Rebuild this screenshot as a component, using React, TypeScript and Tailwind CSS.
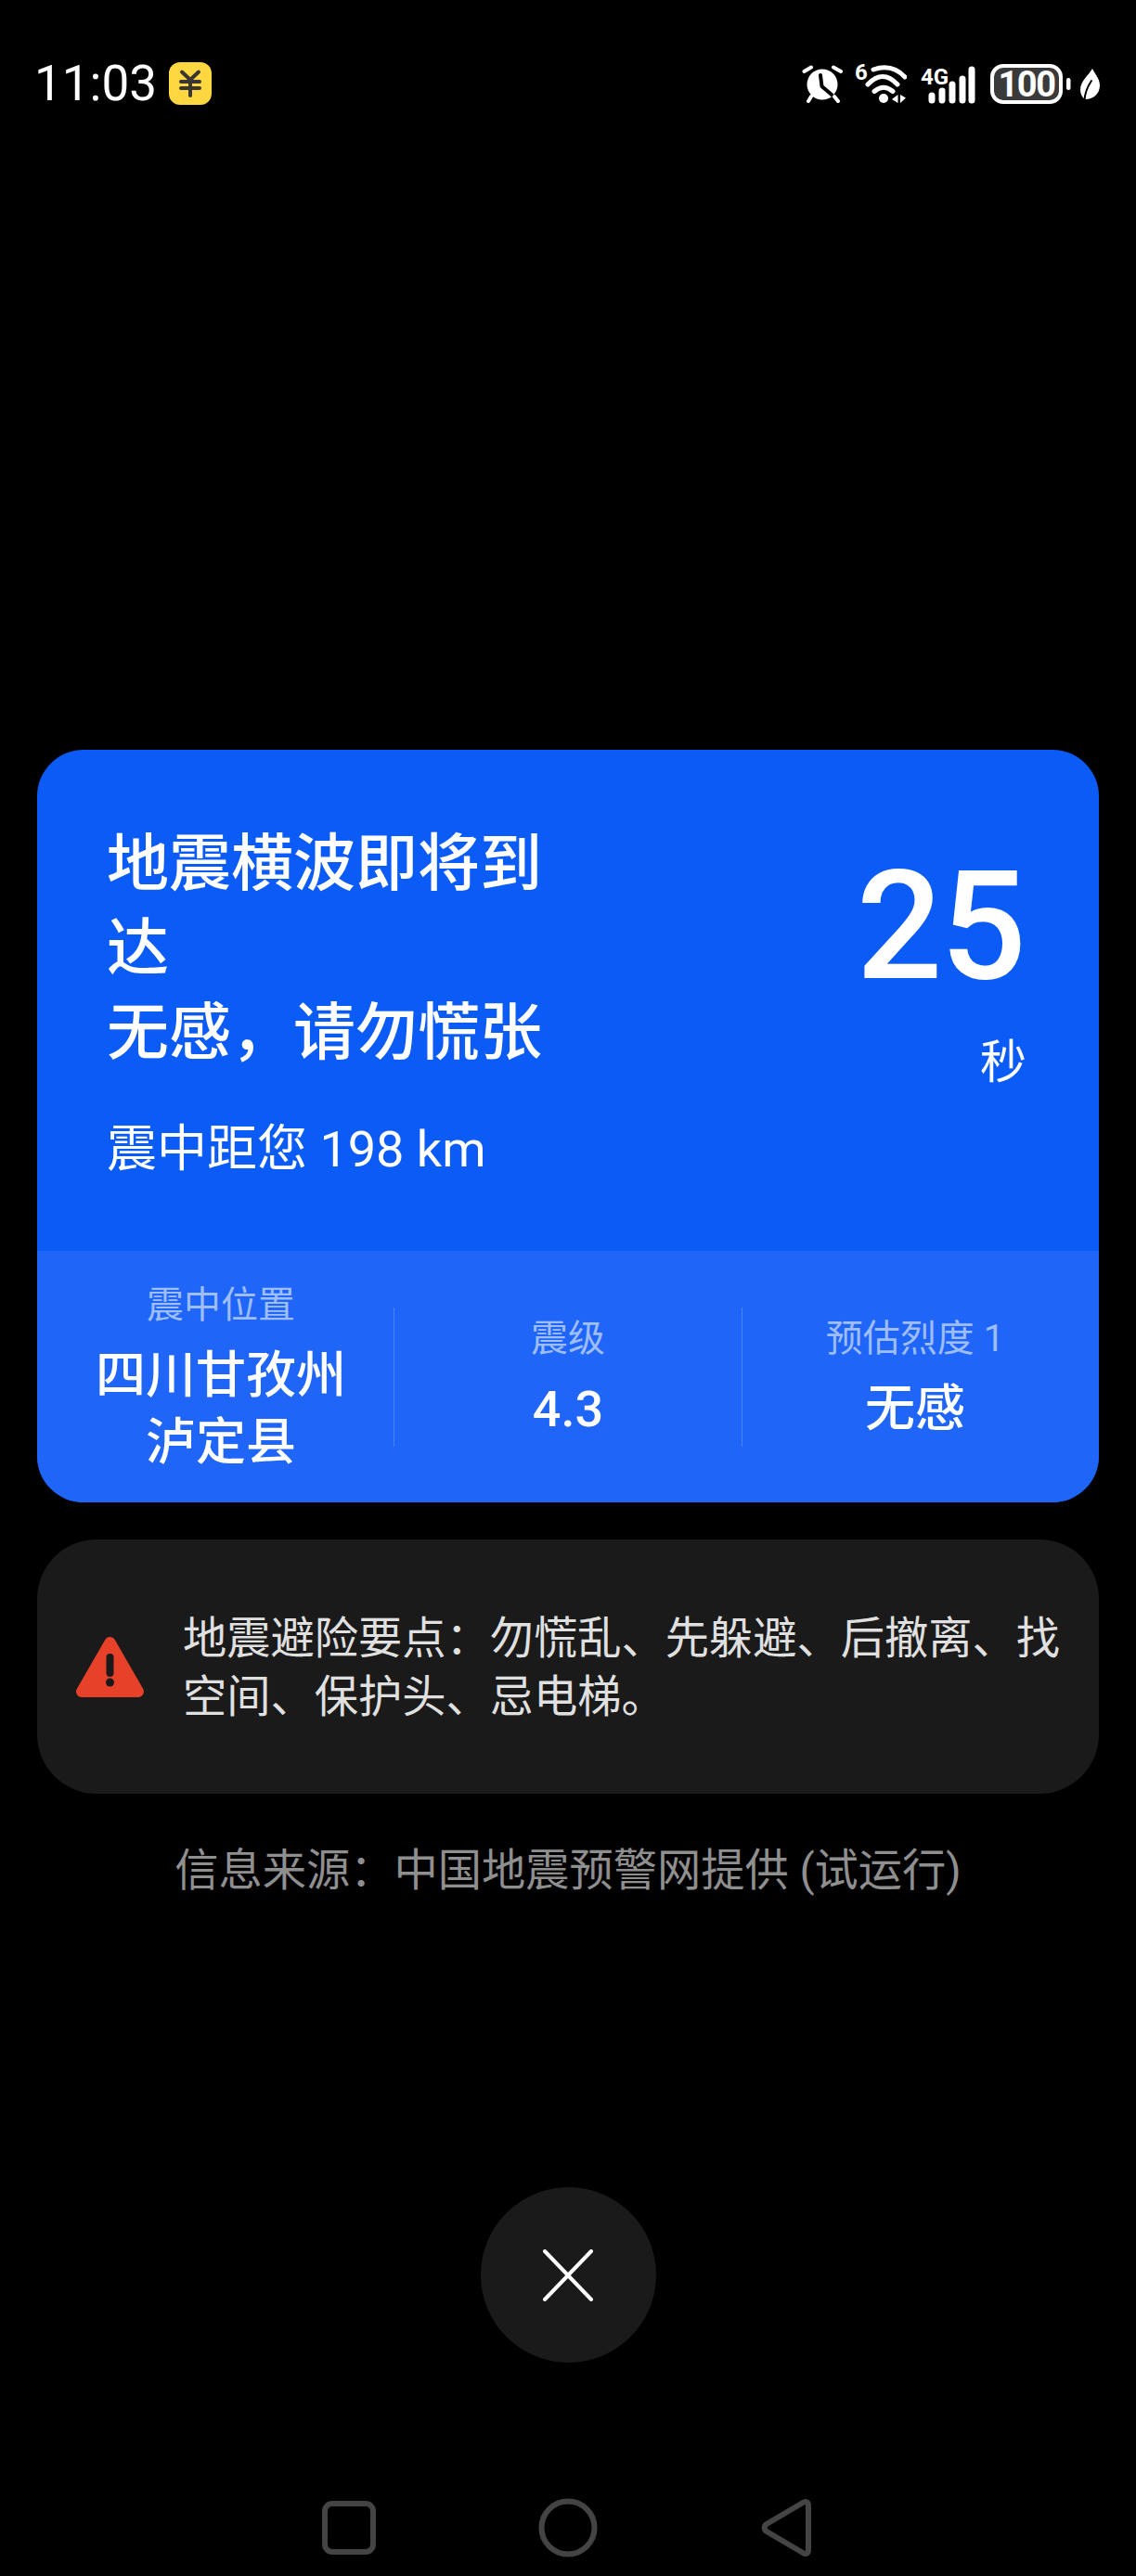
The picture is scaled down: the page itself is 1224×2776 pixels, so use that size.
function AlarmIcon() {
  return (
    <svg width="44" height="60" viewBox="0 0 44 60" fill="none">
      <circle cx="22" cy="31" r="16.5" fill="#fff" />
      <path d="M2.5 17L10 12.5M34 12.5L42 17M7 49L10 44M39 49L35 44" stroke="#fff" strokeWidth="4" strokeLinecap="round" />
      <path d="M20 21L21.5 33L32 42" stroke="#000" strokeWidth="4" strokeLinecap="round" strokeLinejoin="round" />
    </svg>
  );
}

function WifiIcon() {
  return (
    <svg width="56" height="60" viewBox="0 0 56 60" fill="none" className="font-[Roboto,sans-serif]">
      <text x="0" y="26" fontSize="24" fontWeight="700" fill="#fff">6</text>
      <path d="M20 15Q40 8 54 23M14 31Q30 14 46 31M21 38.5Q31 30 41 38.5" stroke="#fff" strokeWidth="5" strokeLinecap="round" />
      <circle cx="31" cy="46" r="5" fill="#fff" />
      <path d="M40 47L46.5 42V51ZM49 42L55 45.5L49 51Z" fill="#fff" />
    </svg>
  );
}

function SignalIcon() {
  return (
    <svg width="62" height="60" viewBox="0 0 62 60" fill="none" className="font-[Roboto,sans-serif]">
      <text x="0" y="31" fontSize="24" fontWeight="700" fill="#fff">4G</text>
      <path d="M12 43V48M23 38V48M34 31V48M45 25V48M55 15V48" stroke="#fff" strokeWidth="7" strokeLinecap="round" />
    </svg>
  );
}

function BatteryIcon() {
  return (
    <svg width="88" height="60" viewBox="0 0 88 60" fill="none" className="font-[Roboto,sans-serif]">
      <rect x="2" y="11" width="74" height="39" rx="12" fill="#3a3a3a" stroke="#fff" strokeWidth="4" />
      <text x="39" y="44" fontSize="38" fontWeight="700" fill="#fff" textAnchor="middle" letterSpacing="-1.5">100</text>
      <rect x="82" y="24" width="4.5" height="13" rx="2.2" fill="#fff" />
    </svg>
  );
}

function LeafIcon() {
  return (
    <svg width="23" height="60" viewBox="0 0 23 60" fill="none">
      <path d="M14 14C10 21 1 27 1 37C1 41 3 45 6 47C15 47 22 41 22 32C22 25 17 20 14 14Z" fill="#fff" />
      <path d="M5.5 48C6 39 9 33 13 27" stroke="#000" strokeWidth="2" strokeLinecap="round" />
    </svg>
  );
}

function YenBadge() {
  return (
    <svg width="46" height="46" viewBox="0 0 46 46" fill="none">
      <rect width="46" height="46" rx="12" fill="#ffd740" />
      <path d="M14 10.5L23 19L32 10.5M23 19V36M13 21H33M13 28H33" stroke="#3a3530" strokeWidth="4" strokeLinecap="round" strokeLinejoin="round" />
    </svg>
  );
}

function WarningIcon() {
  return (
    <svg width="73" height="65" viewBox="0 0 73 65" fill="none">
      <path d="M36.5 6L6 59H67Z" fill="#e8412a" stroke="#e8412a" strokeWidth="12" strokeLinejoin="round" />
      <path d="M36.5 22V39" stroke="#1a1a1a" strokeWidth="8" strokeLinecap="round" />
      <circle cx="36.5" cy="49" r="4.5" fill="#1a1a1a" />
    </svg>
  );
}

function StatCol({ label, value, className }: { label: string; value: string[]; className: string }) {
  return (
    <div className={`flex flex-col items-center gap-3 pt-[3px] ${className}`}>
      <div className="text-[40px] leading-[56px] text-[#9dbdfb]">{label}</div>
      <div className="text-center text-[54px] leading-[72px] font-medium text-white">
        {value.map((line) => (
          <div key={line}>{line}</div>
        ))}
      </div>
    </div>
  );
}

export default function App() {
  return (
    <div lang="zh-CN" className="flex h-[2776px] w-[1224px] flex-col bg-black font-[Roboto,'Noto_Sans_CJK_SC',sans-serif] text-white">
      <header className="mt-[60px] flex h-[60px] items-center justify-between pr-[38px] pl-[37px]">
        <div className="flex items-center gap-[13px]">
          <span className="text-[53px] leading-[60px]">11:03</span>
          <YenBadge />
        </div>
        <div className="flex items-center">
          <AlarmIcon />
          <div className="ml-[13px]"><WifiIcon /></div>
          <div className="ml-[15px]"><SignalIcon /></div>
          <div className="ml-[13px]"><BatteryIcon /></div>
          <div className="ml-2"><LeafIcon /></div>
        </div>
      </header>

      <section className="mx-10 mt-[688px] overflow-hidden rounded-[50px] bg-[#0b5bf7]">
        <div className="flex h-[540px] justify-between pt-[78px] pr-20 pl-[75px]">
          <div>
            <div className="w-[480px] text-[67px] leading-[91px] font-medium">
              <div>地震横波即将到达</div>
              <div>{"无感\uFF0C请勿慌张"}</div>
            </div>
            <div className="mt-[44px] text-[54px] leading-[72px]">震中距您 198 km</div>
          </div>
          <div className="flex flex-col items-end">
            <div className="mt-[18px] text-[163px] leading-[190px] font-medium tracking-[-2px]">25</div>
            <div className="mt-[21px] mr-[-2px] text-[50px] leading-[60px]">秒</div>
          </div>
        </div>
        <div className="flex h-[271px] items-center bg-[#1f65f8]">
          <StatCol label="震中位置" value={["四川甘孜州", "泸定县"]} className="w-[384px] pl-3" />
          <div className="h-[150px] w-px bg-white/20" />
          <StatCol label="震级" value={["4.3"]} className="w-[374px]" />
          <div className="h-[150px] w-px bg-white/20" />
          <StatCol label="预估烈度 1" value={["无感"]} className="w-[384px] pr-3" />
        </div>
      </section>

      <section className="mx-10 mt-10 flex h-[274px] items-center rounded-[64px] bg-[#1a1a1a] pl-[42px]">
        <WarningIcon />
        <p className="ml-[42px] w-[950px] pt-[3px] text-[47.25px] leading-[63px] text-[#e0e0e0]">
          {"地震避险要点\uFF1A勿慌乱、先躲避、后撤离、找空间、保护头、忌电梯。"}
        </p>
      </section>

      <p className="mt-[52px] text-center text-[47.25px] leading-[63px] text-[#8f8f8f]">
        {"信息来源\uFF1A中国地震预警网提供 (试运行)"}
      </p>

      <button className="mx-auto mt-[309px] flex h-[189px] w-[189px] items-center justify-center rounded-full bg-[#1a1a1a]">
        <svg width="56" height="56" viewBox="0 0 56 56" fill="none">
          <path d="M3 2L53 54M53 2L3 54" stroke="#fff" strokeWidth="4" strokeLinecap="round" />
        </svg>
      </button>

      <nav className="mt-[146px] flex justify-center gap-[172px]">
        <svg width="64" height="64" viewBox="0 0 64 64" fill="none">
          <rect x="6" y="6" width="52" height="52" rx="8" stroke="#444" strokeWidth="6" />
        </svg>
        <svg width="64" height="64" viewBox="0 0 64 64" fill="none">
          <circle cx="32" cy="32" r="28.5" stroke="#444" strokeWidth="6" />
        </svg>
        <svg width="64" height="64" viewBox="0 0 64 64" fill="none">
          <path d="M49 5C52 3 55 4 55 8V56C55 60 52 61 49 59L10 36C7 34 7 30 10 28Z" stroke="#444" strokeWidth="6" strokeLinejoin="round" />
        </svg>
      </nav>
    </div>
  );
}
